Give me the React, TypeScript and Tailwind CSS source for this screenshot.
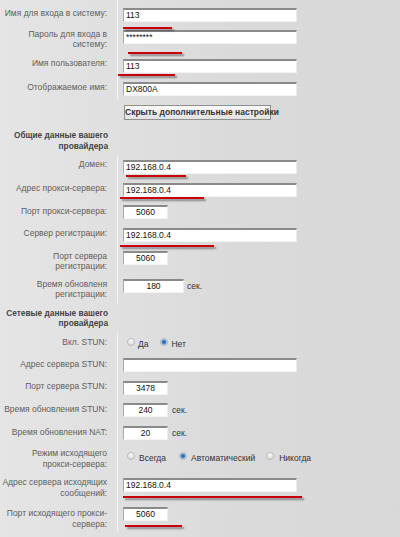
import React from "react";

type RowProps = {
  h: string;
  lpt: string;
  vpt: string;
  lead?: string;
  label: React.ReactNode;
  children?: React.ReactNode;
};

const Row = ({ h, lpt, vpt, lead = "leading-[10px]", label, children }: RowProps) => (
  <div className={`flex ${h}`}>
    <div
      className={`w-[118px] shrink-0 border-r border-[#f3f3f3] pr-[10px] text-right text-[8.5px] whitespace-nowrap text-[#5e5e5e] ${lead} ${lpt}`}
    >
      {label}
    </div>
    <div className={`pl-[5px] ${vpt}`}>{children}</div>
  </div>
);

const inputBase =
  "h-[14px] bg-white border-t-2 border-t-[#8a8a8a] border-l border-l-[#a9a9a9] border-r border-r-[#ececec] border-b border-b-[#f4f4f4] text-[8.5px] leading-[11px] text-[#111] whitespace-nowrap overflow-hidden";

const Wide = ({ v }: { v?: string }) => (
  <div className={`${inputBase} w-[174px] pl-[2px]`}>{v}</div>
);

const Small = ({ v }: { v: string }) => (
  <div className={`${inputBase} w-[45px] text-center`}>{v}</div>
);

const Sec = () => <span className="text-[8.5px] text-[#333] leading-[11px]">сек.</span>;

const Radio = ({ on }: { on?: boolean }) => (
  <span className="w-[8px] h-[8px] rounded-full border border-[#b9b9b9] bg-gradient-to-b from-[#fbfbfb] to-[#dcdcdc] flex items-center justify-center shrink-0">
    {on && <span className="w-[4px] h-[4px] rounded-full bg-[#2f6fb8] shadow-[0_0_1px_1px_rgba(120,170,220,0.8)]" />}
  </span>
);

const RLabel = ({ t }: { t: string }) => (
  <span className="text-[8.5px] leading-[10px] text-[#333]">{t}</span>
);

const RedLine = ({ cls }: { cls: string }) => (
  <div className={`absolute h-[2px] bg-[#c8000a] shadow-[2px_2px_2px_rgba(0,0,0,0.4)] ${cls}`} />
);

export default function App() {
  return (
    <div className="relative w-[400px] h-[537px] overflow-hidden bg-gradient-to-r from-[#e5e5e5] via-[#dadada] via-60% to-[#d8d8d8] font-['Liberation_Sans',Arial,sans-serif]">
      <Row h="h-[24px]" lpt="pt-[8px]" vpt="pt-[8px]" label="Имя для входа в систему:">
        <Wide v="113" />
      </Row>
      <Row
        h="h-[28px]"
        lpt="pt-[5px]"
        vpt="pt-[6px]"
        label={
          <>
            Пароль для входа в<br />
            систему:
          </>
        }
      >
        <Wide v="********" />
      </Row>
      <Row h="h-[24px]" lpt="pt-[6px]" vpt="pt-[7px]" label="Имя пользователя:">
        <Wide v="113" />
      </Row>
      <Row h="h-[24px]" lpt="pt-[6px]" vpt="pt-[6px]" label="Отображаемое имя:">
        <Wide v="DX800A" />
      </Row>

      {/* button row */}
      <div className="flex h-[25px]">
        <div className="w-[118px] shrink-0" />
        <div className="pl-[6px] pt-[5px]">
          <div className="h-[15px] w-[147px] border border-[#8f8f8f] bg-gradient-to-b from-[#fafafa] to-[#e2e2e2] text-[8.5px] leading-[13px] font-bold text-[#333] text-center whitespace-nowrap">
            Скрыть дополнительные настройки
          </div>
        </div>
      </div>

      {/* header 1 */}
      <div className="flex h-[30px]">
        <div className="w-[118px] shrink-0 pr-[10px] pt-[5px] text-right text-[8.3px] leading-[11px] font-bold text-[#444] whitespace-nowrap">
          Общие данные вашего
          <br />
          провайдера
        </div>
      </div>

      <Row h="h-[23px]" lpt="pt-[4px]" vpt="pt-[5px]" label="Домен:">
        <Wide v="192.168.0.4" />
      </Row>
      <Row h="h-[23px]" lpt="pt-[5px]" vpt="pt-[5px]" label="Адрес прокси-сервера:">
        <Wide v="192.168.0.4" />
      </Row>
      <Row h="h-[23px]" lpt="pt-[5px]" vpt="pt-[4px]" label="Порт прокси-сервера:">
        <Small v="5060" />
      </Row>
      <Row h="h-[22px]" lpt="pt-[4px]" vpt="pt-[4px]" label="Сервер регистрации:">
        <Wide v="192.168.0.4" />
      </Row>
      <Row
        h="h-[27px]"
        lpt="pt-[5px]"
        vpt="pt-[5px]"
        label={
          <>
            Порт сервера
            <br />
            регистрации:
          </>
        }
      >
        <Small v="5060" />
      </Row>
      <Row
        h="h-[30px]"
        lpt="pt-[6px]"
        vpt="pt-[6px]"
        label={
          <>
            Время обновленя
            <br />
            регистрации:
          </>
        }
      >
        <div className="flex items-center gap-[3px]">
          <div className={`${inputBase} w-[61px] text-center`}>180</div>
          <Sec />
        </div>
      </Row>

      {/* header 2 */}
      <div className="flex h-[30px]">
        <div className="w-[118px] shrink-0 pr-[10px] pt-[5px] text-right text-[8.3px] leading-[10px] font-bold text-[#444] whitespace-nowrap">
          Сетевые данные вашего
          <br />
          провайдера
        </div>
      </div>

      <Row h="h-[20px]" lpt="pt-[4px]" vpt="pt-[4px]" label="Вкл. STUN:">
        <div className="flex items-center h-[10px] pl-[4px]">
          <Radio />
          <span className="ml-[3px]"><RLabel t="Да" /></span>
          <span className="ml-[12px]"><Radio on /></span>
          <span className="ml-[3px]"><RLabel t="Нет" /></span>
        </div>
      </Row>
      <Row h="h-[23px]" lpt="pt-[6px]" vpt="pt-[5px]" label="Адрес сервера STUN:">
        <Wide />
      </Row>
      <Row h="h-[23px]" lpt="pt-[5px]" vpt="pt-[5px]" label="Порт сервера STUN:">
        <Small v="3478" />
      </Row>
      <Row h="h-[23px]" lpt="pt-[5px]" vpt="pt-[4px]" label="Время обновления STUN:">
        <div className="flex items-center gap-[4px]">
          <Small v="240" />
          <Sec />
        </div>
      </Row>
      <Row h="h-[23px]" lpt="pt-[5px]" vpt="pt-[4px]" label="Время обновления NAT:">
        <div className="flex items-center gap-[4px]">
          <Small v="20" />
          <Sec />
        </div>
      </Row>
      <Row
        h="h-[27px]"
        lpt="pt-[3px]"
        vpt="pt-[6px]"
        lead="leading-[11px]"
        label={
          <>
            Режим исходящего
            <br />
            прокси-сервера:
          </>
        }
      >
        <div className="flex items-center h-[10px] pl-[4px]">
          <Radio />
          <span className="ml-[4px]"><RLabel t="Всегда" /></span>
          <span className="ml-[13px]"><Radio on /></span>
          <span className="ml-[4px]"><RLabel t="Автоматический" /></span>
          <span className="ml-[11px]"><Radio /></span>
          <span className="ml-[5px]"><RLabel t="Никогда" /></span>
        </div>
      </Row>
      <Row
        h="h-[30px]"
        lpt="pt-[5px]"
        vpt="pt-[6px]"
        lead="leading-[11px]"
        label={
          <>
            Адрес сервера исходящих
            <br />
            сообщений:
          </>
        }
      >
        <Wide v="192.168.0.4" />
      </Row>
      <Row
        h="h-[30px]"
        lpt="pt-[6px]"
        vpt="pt-[5px]"
        lead="leading-[11px]"
        label={
          <>
            Порт исходящего прокси-
            <br />
            сервера:
          </>
        }
      >
        <Small v="5060" />
      </Row>

      {/* red annotation underlines */}
      <RedLine cls="left-[123px] top-[27px] w-[49px]" />
      <RedLine cls="left-[128px] top-[52px] w-[54px]" />
      <RedLine cls="left-[118px] top-[74px] w-[57px]" />
      <RedLine cls="left-[126px] top-[175px] w-[60px]" />
      <RedLine cls="left-[120px] top-[197px] w-[84px]" />
      <RedLine cls="left-[120px] top-[245px] w-[94px]" />
      <RedLine cls="left-[123px] top-[496px] w-[179px]" />
      <RedLine cls="left-[125px] top-[525px] w-[57px]" />
    </div>
  );
}
